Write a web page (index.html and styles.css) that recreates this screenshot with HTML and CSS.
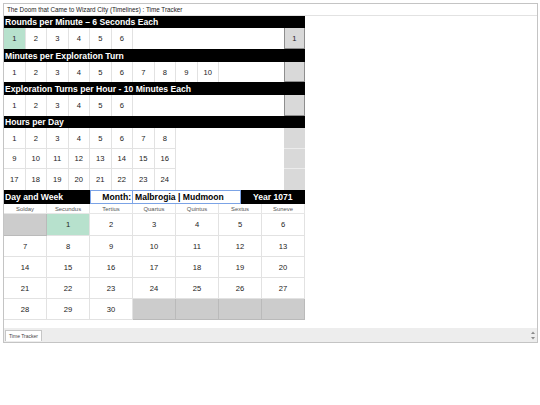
FILE: index.html
```html
<!DOCTYPE html>
<html>
<head>
<meta charset="utf-8">
<link rel="stylesheet" href="styles.css">
</head>
<body>
<div class="frame">
  <div class="title">The Doom that Came to Wizard City (Timelines) : Time Tracker</div>
  <div class="sheet">
    <div class="hdr hdr-12">Rounds per Minute – 6 Seconds Each</div>
    <div class="nums row-21">
      <div class="n on">1</div><div class="n">2</div><div class="n">3</div><div class="n">4</div><div class="n">5</div><div class="n">6</div>
      <div class="tally boxed">1</div>
    </div>
    <div class="hdr hdr-13">Minutes per Exploration Turn</div>
    <div class="nums row-20">
      <div class="n">1</div><div class="n">2</div><div class="n">3</div><div class="n">4</div><div class="n">5</div><div class="n">6</div><div class="n">7</div><div class="n">8</div><div class="n">9</div><div class="n">10</div>
      <div class="tally boxed"></div>
    </div>
    <div class="hdr hdr-13">Exploration Turns per Hour - 10 Minutes Each</div>
    <div class="nums row-21">
      <div class="n">1</div><div class="n">2</div><div class="n">3</div><div class="n">4</div><div class="n">5</div><div class="n">6</div>
      <div class="tally boxed"></div>
    </div>
    <div class="hdr hdr-12">Hours per Day</div>
    <div class="nums row-21 lined">
      <div class="n">1</div><div class="n">2</div><div class="n">3</div><div class="n">4</div><div class="n">5</div><div class="n">6</div><div class="n">7</div><div class="n">8</div>
      <div class="tally"></div>
    </div>
    <div class="nums row-20 lined">
      <div class="n">9</div><div class="n">10</div><div class="n">11</div><div class="n">12</div><div class="n">13</div><div class="n">14</div><div class="n">15</div><div class="n">16</div>
      <div class="tally"></div>
    </div>
    <div class="nums row-21">
      <div class="n">17</div><div class="n">18</div><div class="n">19</div><div class="n">20</div><div class="n">21</div><div class="n">22</div><div class="n">23</div><div class="n">24</div>
      <div class="tally"></div>
    </div>
    <div class="dw">
      <div class="dw-title">Day and Week</div>
      <div class="dw-label">Month:</div>
      <div class="dw-month">Malbrogia | Mudmoon</div>
      <div class="dw-year">Year 1071</div>
    </div>
    <div class="days">
      <div>Solday</div><div>Secundus</div><div>Tertius</div><div>Quartus</div><div>Quintus</div><div>Sextus</div><div>Suneve</div>
    </div>
    <div class="cal">
      <div class="d empty"></div><div class="d on">1</div><div class="d">2</div><div class="d">3</div><div class="d">4</div><div class="d">5</div><div class="d">6</div>
      <div class="d">7</div><div class="d">8</div><div class="d">9</div><div class="d">10</div><div class="d">11</div><div class="d">12</div><div class="d">13</div>
      <div class="d">14</div><div class="d">15</div><div class="d">16</div><div class="d">17</div><div class="d">18</div><div class="d">19</div><div class="d">20</div>
      <div class="d">21</div><div class="d">22</div><div class="d">23</div><div class="d">24</div><div class="d">25</div><div class="d">26</div><div class="d">27</div>
      <div class="d">28</div><div class="d">29</div><div class="d">30</div><div class="d empty"></div><div class="d empty"></div><div class="d empty"></div><div class="d empty"></div>
    </div>
  </div>
  <div class="tabs">
    <div class="tab">Time Tracker</div>
    <svg class="scroll" width="4" height="9" viewBox="0 0 4 9"><path d="M0 3 L2 0.5 L4 3 Z" fill="#8a8a8a"/><path d="M0 6 L2 8.5 L4 6 Z" fill="#8a8a8a"/></svg>
  </div>
</div>
</body>
</html>
```

FILE: styles.css
```css
* { box-sizing: border-box; margin: 0; padding: 0; }
html, body { background: #fff; }
body {
  margin: 0;
  font-family: "Liberation Sans", Arial, sans-serif;
  color: #222;
}
.frame {
  margin: 3px 0 0 3px;
  width: 535px;
  height: 340px;
  border: 1px solid #c4c4c4;
  display: flex;
  flex-direction: column;
}
.title {
  height: 12px;
  border-bottom: 1px solid #e2e2e2;
  font-size: 6.3px;
  line-height: 11px;
  padding-left: 3px;
  color: #222;
  white-space: nowrap;
}
.sheet {
  flex: 1;
  width: 301px;
}
.hdr {
  background: #000;
  color: #fff;
  font-weight: bold;
  font-size: 8.6px;
  padding-left: 1px;
  display: flex;
  align-items: center;
  white-space: nowrap;
}
.hdr-12 { height: 12px; }
.hdr-13 { height: 13px; }
.nums {
  display: grid;
  grid-template-columns: repeat(14, 21.5px);
}
.row-20 { height: 20px; }
.row-21 { height: 21px; }
.n {
  display: flex;
  align-items: center;
  justify-content: center;
  font-size: 7.6px;
  border-right: 1px solid #e2e2e2;
}
.lined .n { border-bottom: 1px solid #e2e2e2; }
.on { background: #b7e1cd; }
.tally {
  grid-column: 14;
  background: #d9d9d9;
  display: flex;
  align-items: center;
  justify-content: center;
  font-size: 7.6px;
}
.lined .tally { border-bottom: 1px solid #ececec; }
.tally.boxed { border: 1px solid #8e8e8e; border-top: none; }
.dw {
  display: grid;
  grid-template-columns: repeat(14, 21.5px);
  height: 14px;
  font-size: 8.6px;
  font-weight: bold;
  white-space: nowrap;
}
.dw > div { display: flex; align-items: center; }
.dw-title { grid-column: span 4; background: #000; color: #fff; padding-left: 1px; }
.dw-label {
  grid-column: span 2;
  justify-content: flex-end;
  padding-right: 1px;
  color: #000;
  border: 1px solid #7ba3e6;
}
.dw-month {
  grid-column: span 5;
  padding-left: 2px;
  color: #000;
  border: 1px solid #7ba3e6;
  border-left: none;
}
.dw-year { grid-column: span 3; background: #000; color: #fff; justify-content: center; }
.days {
  display: grid;
  grid-template-columns: repeat(7, 43px);
  height: 10px;
  font-size: 5.9px;
  color: #555;
  border-bottom: 1px solid #e6e6e6;
}
.days > div {
  display: flex;
  align-items: center;
  justify-content: center;
  border-right: 1px solid #e6e6e6;
}
.cal {
  display: grid;
  grid-template-columns: repeat(7, 43px);
  grid-template-rows: 22px 21px 21px 21px 21px;
}
.d {
  display: flex;
  align-items: center;
  justify-content: center;
  font-size: 7.6px;
  border-right: 1px solid #e2e2e2;
  border-bottom: 1px solid #e2e2e2;
}
.d.empty { background: #cccccc; border-color: #bababa; }
.tabs {
  height: 14px;
  background: #ededed;
  display: flex;
  align-items: flex-end;
  justify-content: space-between;
  padding: 0 2px 0 1px;
}
.tab {
  height: 11px;
  background: #fff;
  border: 1px solid #c6c6c6;
  border-bottom: none;
  font-size: 5px;
  line-height: 10px;
  padding: 0 3px 0 3px;
  color: #444;
  white-space: nowrap;
  margin-bottom: 1px;
}
.scroll { align-self: center; }
```
